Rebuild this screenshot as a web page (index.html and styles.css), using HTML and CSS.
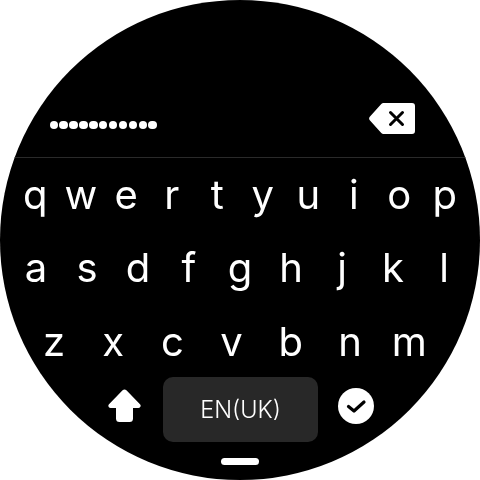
FILE: index.html
```html
<!DOCTYPE html>
<html lang="en">
<head>
<meta charset="utf-8">
<title>Keyboard</title>
<link rel="stylesheet" href="styles.css">
</head>
<body>
<main class="watch">
  <header class="entry">
    <div class="dots">
      <i></i><i></i><i></i><i></i><i></i><i></i><i></i><i></i><i></i><i></i><i></i>
    </div>
    <svg class="backspace" viewBox="0 0 46 31" width="46" height="31" aria-hidden="true">
      <path d="M14.5 0H43a3 3 0 0 1 3 3v25a3 3 0 0 1-3 3H14.5a3 3 0 0 1-2.2-1L1 17.6a3.2 3.2 0 0 1 0-4.2L12.3 1a3 3 0 0 1 2.2-1z" fill="#fff"/>
      <path d="M21.500 9.500l12 12M33.500 9.500l-12 12" stroke="#000" stroke-width="3" fill="none" stroke-linecap="round"/>
    </svg>
  </header>
  <section class="keys">
    <div class="row row1"><span>q</span><span>w</span><span>e</span><span>r</span><span>t</span><span>y</span><span>u</span><span>i</span><span>o</span><span>p</span></div>
    <div class="row row2"><span>a</span><span>s</span><span>d</span><span>f</span><span>g</span><span>h</span><span>j</span><span>k</span><span>l</span></div>
    <div class="row row3"><span>z</span><span>x</span><span>c</span><span>v</span><span>b</span><span>n</span><span>m</span></div>
  </section>
  <footer class="actions">
    <svg class="shift" viewBox="0 0 33 33" width="33" height="33" aria-hidden="true">
      <path d="M16.500 0.500a2.600 2.600 0 0 1 1.900 .8L32 15.200c1.400 1.500 .5 3.800-1.600 3.800H25v10.500a3.500 3.500 0 0 1-3.500 3.500h-10A3.500 3.500 0 0 1 8 29.500V19H2.600c-2.100 0-3-2.300-1.600-3.800L14.600 1.300a2.600 2.600 0 0 1 1.900-.8z" fill="#fff"/>
    </svg>
    <div class="lang">EN(UK)</div>
    <svg class="check" viewBox="0 0 36 36" width="36" height="36" aria-hidden="true">
      <circle cx="18" cy="18" r="18" fill="#fff"/>
      <path d="M10.500 18.500l5.500 4.500L26 14" stroke="#000" stroke-width="3.200" fill="none" stroke-linecap="round" stroke-linejoin="round"/>
    </svg>
  </footer>
  <div class="handle"></div>
</main>
</body>
</html>
```
FILE: styles.css
```css
* { box-sizing: border-box; }
html, body { margin: 0; padding: 0; background: #fff; }
body { width: 480px; height: 480px; overflow: hidden; }
.watch {
  width: 480px;
  height: 480px;
  border-radius: 50%;
  background: #000;
  color: #fff;
  overflow: hidden;
  display: flex;
  flex-direction: column;
  font-family: Inter, "Noto Sans", sans-serif;
  will-change: transform;
}
.entry {
  height: 158px;
  flex: none;
  display: flex;
  justify-content: space-between;
  padding: 103px 65px 0 49.500px;
  border-bottom: 1px solid #2a2a2a;
}
.dots { display: flex; gap: 1.400px; height: 8.500px; margin-top: 17.750px; }
.dots i { width: 8.500px; height: 8.500px; border-radius: 50%; background: #fff; }
.backspace, .shift, .check { display: block; flex: none; }
.keys { height: 219px; flex: none; display: flex; flex-direction: column; gap: 23.500px; padding-top: 11.500px; }
.row { display: flex; flex: none; height: 50px; font-size: 40px; font-weight: 400; line-height: 50px; text-align: center; }
.row span { flex: 1 1 0; }
.row1 { padding: 0 12.500px; }
.row2 { padding: 0 10.500px; }
.row3 { padding: 0 41.200px 0 24.400px; }
.actions { height: 65px; flex: none; display: flex; align-items: flex-start; padding-left: 108px; }
.shift { margin-top: 12px; }
.lang {
  width: 155px;
  height: 65px;
  margin-left: 22px;
  border-radius: 10px;
  background: #282828;
  font-size: 23.500px;
  font-weight: 350;
  line-height: 65px;
  text-align: center;
}
.check { margin: 11px 0 0 20px; }
.handle { width: 38px; height: 7px; margin: 16px auto 0; border-radius: 4px; background: #fff; flex: none; }
```
